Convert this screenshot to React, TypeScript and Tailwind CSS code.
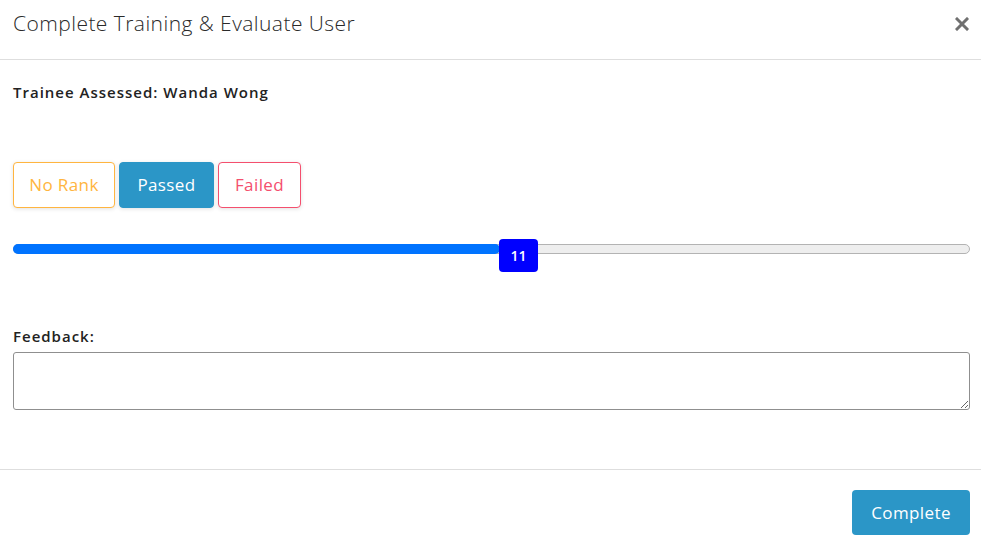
import React, { useState } from "react";

const ranks = [
    { label: "No Rank", cls: "w-[102px] border-[#ffb540] text-[#ffb540] bg-white" },
    { label: "Passed", cls: "w-[95px] border-[#2b96c7] text-white bg-[#2b96c7]" },
    { label: "Failed", cls: "w-[83px] border-[#f44f6e] text-[#f44f6e] bg-white" },
];

export default function App() {
    const [score] = useState(11);
    const pct = 51;

    return (
        <div className="w-[981px] h-[545px] bg-white text-[#212529] font-['Open_Sans',sans-serif] flex flex-col">
            {/* Header */}
            <div className="h-[60px] border-b border-[#dedede] flex items-start justify-between pl-[13px] pr-[11px] pt-[9px]">
                <h1 className="text-[21px] leading-[28px] font-light tracking-[0.45px] text-[#2a2a2a]">
                    Complete Training &amp; Evaluate User
                </h1>
                <button className="w-[16px] h-[16px] mt-[7px] flex items-center justify-center text-[#707070]">
                    <svg width="14" height="14" viewBox="0 0 14 14">
                        <path d="M2 2 L12 12 M12 2 L2 12" stroke="currentColor" strokeWidth="3" strokeLinecap="square" />
                    </svg>
                </button>
            </div>

            {/* Body */}
            <div className="flex-1 pl-[13px] pr-[11px] pt-[21px]">
                <p className="text-[15px] font-semibold tracking-[1px] text-[#222] leading-[22px]">
                    Trainee Assessed: Wanda Wong
                </p>

                <div className="flex gap-[4px] mt-[59px]">
                    {ranks.map((r) => (
                        <button
                            key={r.label}
                            className={`h-[46px] rounded-[4px] border text-[17px] tracking-[0.4px] shadow-[0_1px_4px_rgba(0,0,0,0.12)] ${r.cls}`}
                        >
                            {r.label}
                        </button>
                    ))}
                </div>

                {/* Slider */}
                <div className="relative mt-[36px] h-[10px] rounded-full border border-[#b3b3b3] bg-[#eeeeee]">
                    <div
                        className="absolute left-[-1px] top-[-1px] bottom-[-1px] rounded-full bg-[#0073ff]"
                        style={{ width: `${pct}%` }}
                    />
                    <div
                        className="absolute top-[-6px] left-[485px] w-[39px] h-[33px] rounded-[4px] bg-[#0000ff] text-white text-[14px] font-semibold flex items-center justify-center"
                    >
                        {score}
                    </div>
                </div>

                <label className="block mt-[71px] text-[15px] font-semibold tracking-[1px] text-[#222] leading-[22px]">
                    Feedback:
                </label>
                <textarea className="block mt-[5px] w-full h-[58px] border border-[#8f8f8f] rounded-[3px] resize-y outline-none" />
            </div>

            {/* Footer */}
            <div className="h-[76px] border-t border-[#dedede] flex items-start justify-end pr-[11px] pt-[20px]">
                <button className="h-[45px] w-[118px] rounded-[4px] bg-[#2b96c7] text-white text-[17px] tracking-[0.4px]">
                    Complete
                </button>
            </div>
        </div>
    );
}
